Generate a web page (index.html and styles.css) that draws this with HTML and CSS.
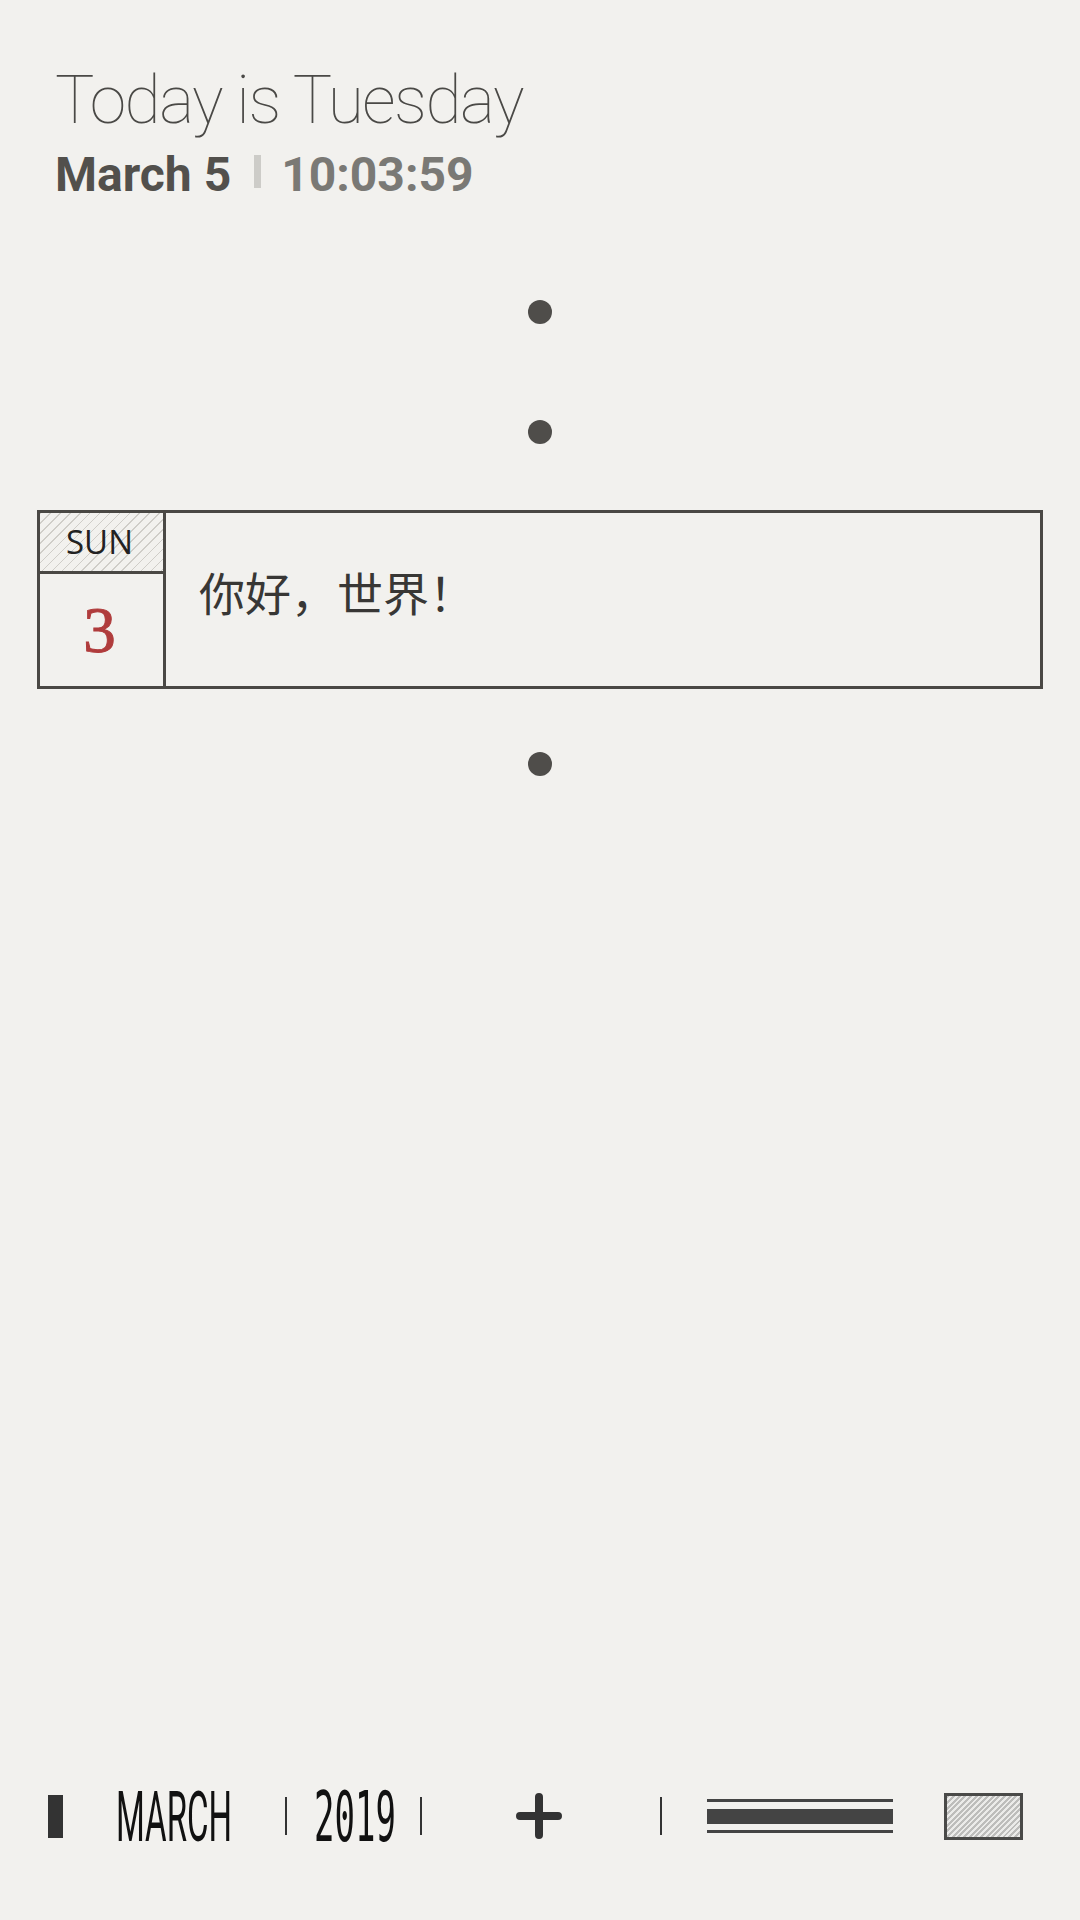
FILE: index.html
```html
<!DOCTYPE html>
<html lang="en">
<head>
<meta charset="utf-8">
<title>Calendar</title>
<link rel="stylesheet" href="styles.css">
</head>
<body>
<div class="page">
  <header class="head">
    <div class="title">Today is Tuesday</div>
    <div class="sub"><span class="date">March 5</span><span class="bar"></span><span class="time">10:03:59</span></div>
  </header>

  <div class="dot dot-1"></div>
  <div class="dot dot-2"></div>

  <div class="card">
    <div class="day-col">
      <div class="dow">SUN</div>
      <div class="dnum">3</div>
    </div>
    <div class="note">你好，世界！</div>
  </div>

  <div class="dot dot-3"></div>

  <nav class="toolbar">
    <span class="tb-block"></span>
    <span class="tb-month">MARCH</span>
    <span class="tb-sep sep-1"></span>
    <span class="tb-year">2019</span>
    <span class="tb-sep sep-2"></span>
    <svg class="tb-plus" width="46" height="46" viewBox="0 0 46 46"><path d="M23 4V42M4 23H42" stroke="#333" stroke-width="8" stroke-linecap="round" fill="none"/></svg>
    <span class="tb-sep sep-3"></span>
    <span class="tb-lines"><i class="ln-thin"></i><i class="ln-thick"></i><i class="ln-thin"></i></span>
    <span class="tb-rect"></span>
  </nav>
</div>
</body>
</html>
```

FILE: styles.css
```css
html, body {
  margin: 0;
  padding: 0;
  background: #f2f1ee;
}

.page {
  width: 1080px;
  height: 1920px;
  display: flex;
  flex-direction: column;
  background: #f2f1ee;
  font-family: Roboto, "Liberation Sans", sans-serif;
}

.head {
  padding: 61px 0 0 55px;
}

.title {
  font-size: 66px;
  line-height: 80px;
  font-weight: 100;
  letter-spacing: -1.5px;
  color: #4a4946;
  white-space: nowrap;
}

.sub {
  margin-top: 6px;
  font-size: 48px;
  line-height: 56px;
  font-weight: 700;
  white-space: nowrap;
}

.date {
  color: #52504c;
}

.bar {
  display: inline-block;
  width: 7px;
  height: 33px;
  background: #cdccc8;
  margin: 0 20px 3px 23px;
  vertical-align: baseline;
}

.time {
  color: #7a7975;
}

.dot {
  width: 24px;
  height: 24px;
  border-radius: 50%;
  background: #4f4d4a;
  align-self: center;
}

.dot-1 { margin-top: 97px; }
.dot-2 { margin-top: 96px; }
.dot-3 { margin-top: 63px; }

.card {
  margin: 66px 37px 0 37px;
  height: 173px;
  border: 3px solid #4a4844;
  display: flex;
}

.day-col {
  width: 123px;
  border-right: 3px solid #4a4844;
  display: flex;
  flex-direction: column;
}

.dow {
  height: 58px;
  border-bottom: 3px solid #4a4844;
  background: repeating-linear-gradient(135deg, #cfcdc8 0 1px, #f2f1ee 1px 7px);
  font-family: "Open Sans", "Noto Sans", sans-serif;
  font-size: 33px;
  line-height: 58px;
  text-align: center;
  color: #222;
  padding-right: 4px;
}

.dnum {
  flex: 1;
  display: flex;
  align-items: center;
  justify-content: center;
  font-family: "Liberation Serif", serif;
  font-size: 65px;
  color: #b03c3c;
  -webkit-text-stroke: 1px #b03c3c;
  padding-right: 4px;
}

.note {
  padding: 55px 0 0 33px;
  font-family: "Noto Sans CJK SC", sans-serif;
  font-size: 46px;
  line-height: 46px;
  color: #383735;
}

.toolbar {
  margin-top: auto;
  margin-bottom: 54px;
  height: 100px;
  display: flex;
  align-items: center;
  padding-left: 48px;
}

.tb-block {
  width: 15px;
  height: 43px;
  background: #333;
}

.tb-month,
.tb-year {
  display: inline-block;
  line-height: 1;
  color: #111;
  white-space: nowrap;
}

.tb-month {
  margin-left: 53px;
  width: 116px;
  font-family: Roboto, sans-serif;
  font-size: 33px;
  font-weight: 400;
  transform: scaleY(2.15);
}

.tb-year {
  margin-left: 27px;
  width: 82px;
  font-family: "DejaVu Sans Mono", monospace;
  font-size: 34px;
  transform: scaleY(2.05);
}

.tb-sep {
  width: 2px;
  height: 38px;
  background: #333;
}

.sep-1 { margin-left: 53px; }
.sep-2 { margin-left: 24px; }
.sep-3 { margin-left: 98px; }

.tb-plus {
  margin-left: 94px;
  display: block;
}

.tb-lines {
  margin-left: 45px;
  width: 186px;
  display: flex;
  flex-direction: column;
}

.tb-lines i {
  display: block;
  background: #444;
}

.ln-thin { height: 3px; }
.ln-thick { height: 15px; margin: 7px 0 6px; }

.tb-rect {
  margin-left: 51px;
  width: 73px;
  height: 41px;
  border: 3px solid #4a4a48;
  background: repeating-linear-gradient(135deg, #bdbdbb 0 2px, #ebebe9 2px 4px);
}
```
